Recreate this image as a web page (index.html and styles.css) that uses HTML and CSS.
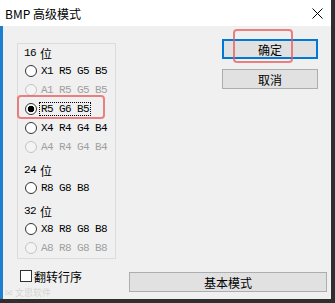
FILE: index.html
```html
<!DOCTYPE html>
<html lang="zh-CN">
  <head>
    <meta charset="UTF-8" />
    <title>BMP 高级模式</title>
    <link rel="stylesheet" href="styles.css">
  </head>
  <body>
    <div class="window">
      <div class="titlebar">
        <span class="title">BMP 高级模式</span>
        <svg class="close" width="11" height="11" viewBox="0 0 11 11">
          <path d="M0.5 0.5 L10.5 10.5 M10.5 0.5 L0.5 10.5" stroke="#000" stroke-width="1" fill="none" />
        </svg>
      </div>
      <div class="client">
        <div class="top-row">
          <div class="group">
            <div class="head">16 <span class="cjk">位</span></div>
            <div class="radio"><span class="dot"></span>X1 R5 G5 B5</div>
            <div class="radio disabled"><span class="dot"></span>A1 R5 G5 B5</div>
            <div class="radio checked"><span class="dot"></span><span class="focus">R5 G6 B5</span></div>
            <div class="radio"><span class="dot"></span>X4 R4 G4 B4</div>
            <div class="radio disabled"><span class="dot"></span>A4 R4 G4 B4</div>

            <div class="head spaced">24 <span class="cjk">位</span></div>
            <div class="radio"><span class="dot"></span>R8 G8 B8</div>

            <div class="head spaced">32 <span class="cjk">位</span></div>
            <div class="radio"><span class="dot"></span>X8 R8 G8 B8</div>
            <div class="radio disabled"><span class="dot"></span>A8 R8 G8 B8</div>
          </div>
          <div class="buttons">
            <button class="btn default">确定</button>
            <button class="btn">取消</button>
          </div>
        </div>
        <div class="bottom-row">
          <label class="check"><span class="box"></span>翻转行序</label>
          <button class="btn wide">基本模式</button>
        </div>
      </div>

      <!-- red annotation marks from the screenshot -->
      <div class="mark mark-ok"></div>
      <div class="mark mark-r5"></div>
      <div class="watermark">✉ 文思软件</div>
    </div>
  </body>
</html>
```

FILE: styles.css
```css
body {
  margin: 0;
  width: 335px;
  height: 303px;
  overflow: hidden;
  background-color: #2f2f2f;
  font-family: "Noto Sans CJK SC", sans-serif;
  color: #000;
}
.window {
  position: relative;
  width: 331px;
  height: 299px;
  background-color: #f0f0f0;
  display: flex;
  flex-direction: column;
}
.titlebar {
  height: 26px;
  background-color: #fff;
  display: flex;
  align-items: center;
  justify-content: space-between;
  padding: 0 8px 0 5px;
  font-size: 12px;
}
.close {
  display: block;
}
.client {
  flex: 1;
  border-left: 3px solid #1e7fd0;
  padding: 13px 4px 0 14px;
  display: flex;
  flex-direction: column;
}
.top-row {
  display: flex;
  align-items: flex-start;
}
.group {
  box-sizing: border-box;
  width: 99px;
  margin-top: 4px;
  padding: 1px 0 1px 0;
  border: 1px solid #dcdcdc;
  font-family: "Liberation Mono", "Noto Sans CJK SC", monospace;
  font-size: 11px;
  letter-spacing: -0.6px;
}
.head {
  height: 16px;
  display: flex;
  align-items: center;
  padding-left: 6px;
}
.head.spaced {
  margin-top: 6px;
}
.cjk {
  font-family: "Noto Sans CJK SC", sans-serif;
  font-size: 12px;
  letter-spacing: 0;
  margin-left: 4px;
}
.radio {
  height: 19px;
  display: flex;
  align-items: center;
  padding-left: 7px;
  white-space: pre;
}
.dot {
  box-sizing: border-box;
  width: 12px;
  height: 12px;
  margin-right: 4px;
  border: 1px solid #333;
  border-radius: 50%;
  background-color: #fff;
}
.radio.checked .dot {
  background: radial-gradient(circle, #000 3px, #fff 3.6px);
}
.radio.disabled {
  color: #a0a0a0;
}
.radio.disabled .dot {
  border-color: #c4c4c4;
  background-color: #f4f4f4;
}
.focus {
  outline: 1px dotted #000;
  padding: 0 1px;
  margin-left: -1px;
}
.buttons {
  margin-left: auto;
  margin-right: 9px;
  display: flex;
  flex-direction: column;
  gap: 10px;
}
.btn {
  box-sizing: border-box;
  width: 96px;
  height: 20px;
  padding: 0;
  border: 1px solid #adadad;
  background-color: #e1e1e1;
  font-family: "Noto Sans CJK SC", sans-serif;
  font-size: 12px;
  color: #000;
}
.btn.default {
  border: 2px solid #0078d7;
}
.bottom-row {
  display: flex;
  align-items: flex-start;
  margin-top: 11px;
}
.check {
  display: flex;
  align-items: center;
  margin-left: 3px;
  height: 12px;
  font-size: 12px;
}
.box {
  box-sizing: border-box;
  width: 12px;
  height: 12px;
  margin-right: 2px;
  border: 1px solid #333;
  background-color: #fff;
}
.btn.wide {
  width: 198px;
  margin-top: 2px;
  margin-left: auto;
}
.mark {
  position: absolute;
  border: 2px solid rgba(232, 90, 90, 0.75);
  border-radius: 4px;
}
.mark-ok {
  left: 233px;
  top: 29px;
  width: 56px;
  height: 30px;
}
.mark-r5 {
  left: 17px;
  top: 95px;
  width: 84px;
  height: 20px;
}
.watermark {
  position: absolute;
  left: 5px;
  top: 287px;
  font-size: 9px;
  line-height: 11px;
  color: #d4d4d4;
}
```
